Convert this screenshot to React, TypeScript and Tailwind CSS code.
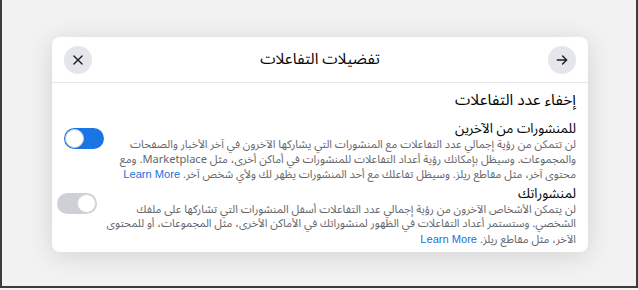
import React from 'react';

const arabic = { fontFamily: '"Noto Sans Arabic", "Roboto", "DejaVu Sans", sans-serif' };

type ToggleProps = { on: boolean; disabled?: boolean };

// Facebook-style switch; in RTL the "on" knob sits on the left.
const Toggle: React.FC<ToggleProps> = ({ on, disabled }) => (
  <div
    className={`mt-[8px] flex h-[21px] w-[40px] shrink-0 items-center rounded-full px-[1px] ${
      on ? 'justify-end bg-[#1b74e4]' : 'justify-start bg-[#c9ccd1]'
    } ${disabled ? 'opacity-90' : ''}`}
  >
    <div className="h-[19px] w-[19px] rounded-full border border-[#d0d2d6] bg-white" />
  </div>
);

type SectionProps = { title: string; lines: string[]; on: boolean; disabled?: boolean };

const Section: React.FC<SectionProps> = ({ title, lines, on, disabled }) => (
  <div className="flex items-start gap-[10px]">
    <div className="flex-1">
      <div className="text-[13.5px] leading-[18px] text-[#050505]">{title}</div>
      <div className="text-[11.1px] leading-[14.5px] text-[#65676b]">
        {lines.map((line, i) => (
          <div key={i} className="whitespace-nowrap">
            {line}
            {i === lines.length - 1 && (
              <>
                {' '}
                <span className="text-[#216fdb]" style={{ fontFamily: '"Liberation Sans", Arial, sans-serif' }}>
                  Learn More
                </span>
              </>
            )}
          </div>
        ))}
      </div>
    </div>
    <Toggle on={on} disabled={disabled} />
  </div>
);

export default function App() {
  return (
    <div className="h-[290px] w-[638px] bg-[#f5f5f5]" style={arabic}>
      <div className="h-[288px] border-x-2 border-b-2 border-[#3c3c3c] bg-[#f2f2f2] pl-[50px] pt-[37px]">
        <div
          dir="rtl"
          className="h-[215px] w-[536px] overflow-hidden rounded-[8px] bg-white shadow-[0_4px_26px_rgba(0,0,0,0.13)]"
        >
          {/* header */}
          <div className="flex h-[46px] items-center justify-between border-b border-[#e6e6e6] px-3">
            <button className="flex h-[28px] w-[28px] items-center justify-center rounded-full bg-[#e4e6eb]">
              <svg width="14" height="14" viewBox="0 0 24 24" fill="none" stroke="#1c1e21" strokeWidth="2.4" strokeLinecap="round">
                <path d="M4 12h16M13 5l7 7-7 7" />
              </svg>
            </button>
            <div className="text-[15.5px] text-[#050505]">تفضيلات التفاعلات</div>
            <button className="flex h-[28px] w-[28px] items-center justify-center rounded-full bg-[#e4e6eb]">
              <svg width="14" height="14" viewBox="0 0 24 24" fill="none" stroke="#1c1e21" strokeWidth="2.4" strokeLinecap="round">
                <path d="M5 5l14 14M19 5L5 19" />
              </svg>
            </button>
          </div>

          {/* body */}
          <div className="px-3 pt-[6px]">
            <div className="mb-[9px] text-[15.5px] leading-[22px] text-[#050505]">إخفاء عدد التفاعلات</div>
            <Section
              title="للمنشورات من الآخرين"
              on
              lines={[
                'لن تتمكن من رؤية إجمالي عدد التفاعلات مع المنشورات التي يشاركها الآخرون في آخر الأخبار والصفحات',
                'والمجموعات. وسيظل بإمكانك رؤية أعداد التفاعلات للمنشورات في أماكن أخرى، مثل Marketplace. ومع',
                'محتوى آخر، مثل مقاطع ريلز. وسيظل تفاعلك مع أحد المنشورات يظهر لك ولأي شخص آخر.',
              ]}
            />
            <div className="mt-[2px]">
              <Section
                title="لمنشوراتك"
                on={false}
                disabled
                lines={[
                  'لن يتمكن الأشخاص الآخرون من رؤية إجمالي عدد التفاعلات أسفل المنشورات التي تشاركها على ملفك',
                  'الشخصي. وستستمر أعداد التفاعلات في الظهور لمنشوراتك في الأماكن الأخرى، مثل المجموعات، أو للمحتوى',
                  'الآخر، مثل مقاطع ريلز.',
                ]}
              />
            </div>
          </div>
        </div>
      </div>
    </div>
  );
}
